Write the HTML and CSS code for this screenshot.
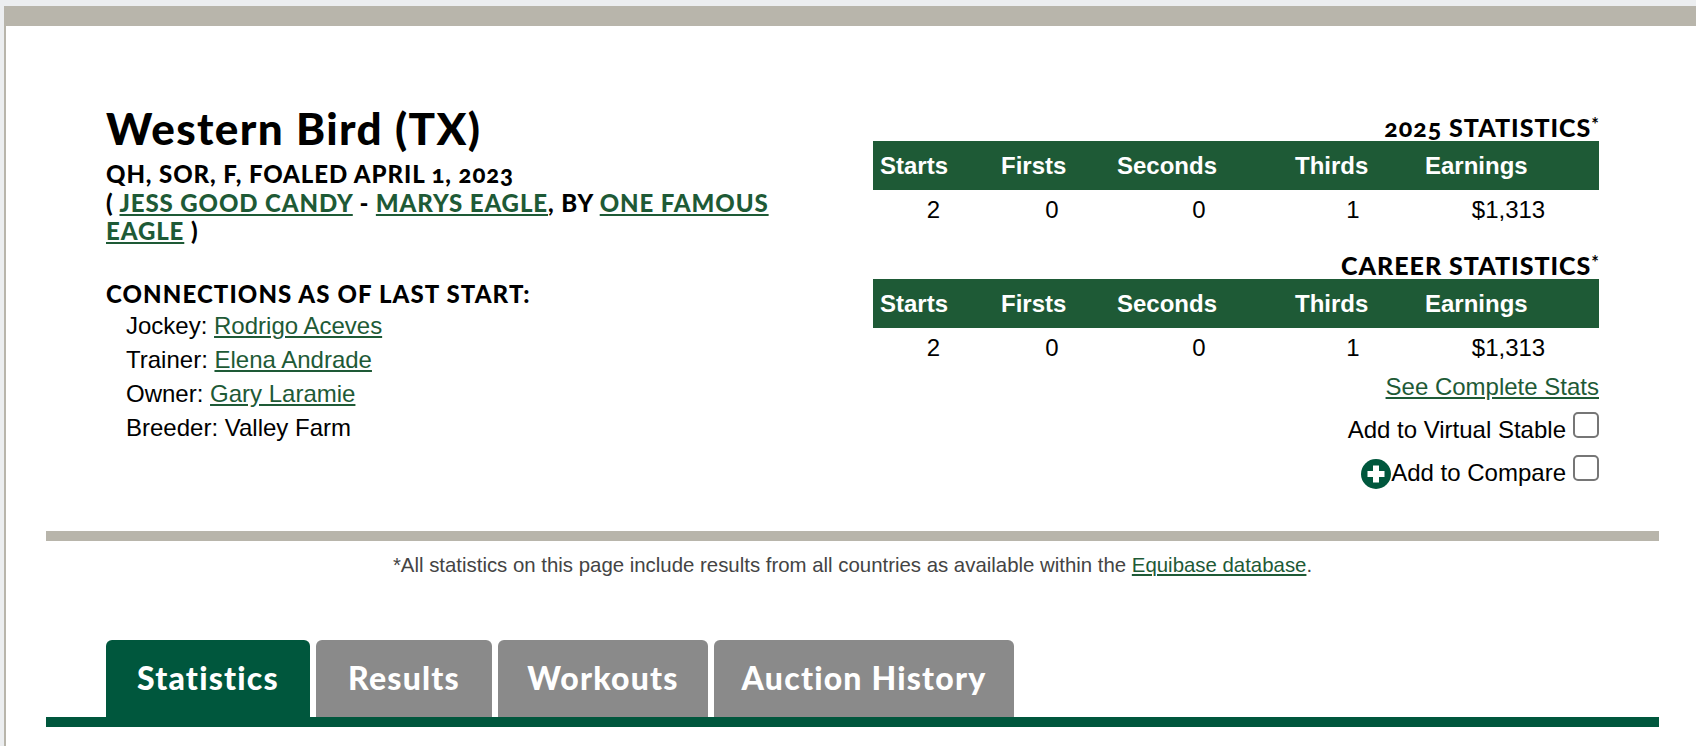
FILE: index.html
```html
<!DOCTYPE html>
<html lang="en">
<head>
<meta charset="utf-8">
<title>Western Bird (TX)</title>
<link rel="stylesheet" href="styles.css">
</head>
<body>
<div class="page">
  <div class="topbar"></div>
  <main class="content">
    <section class="profile">
      <div class="info">
        <h1 class="name">Western Bird (TX)</h1>
        <p class="meta">QH, SOR, F, FOALED APRIL 1, 2023<br>( <a href="#">JESS GOOD CANDY</a> - <a href="#">MARYS EAGLE</a>, BY <a href="#">ONE FAMOUS EAGLE</a> )</p>
        <h2 class="conn-title">CONNECTIONS AS OF LAST START:</h2>
        <ul class="conn">
          <li>Jockey: <a href="#">Rodrigo Aceves</a></li>
          <li>Trainer: <a href="#">Elena Andrade</a></li>
          <li>Owner: <a href="#">Gary Laramie</a></li>
          <li>Breeder: Valley Farm</li>
        </ul>
      </div>
      <div class="stats">
        <h3 class="stats-title first">2025 STATISTICS<sup>*</sup></h3>
        <table class="stat-table">
          <colgroup><col class="c1"><col class="c2"><col class="c3"><col class="c4"><col class="c5"></colgroup>
          <thead><tr><th>Starts</th><th>Firsts</th><th>Seconds</th><th>Thirds</th><th>Earnings</th></tr></thead>
          <tbody><tr><td>2</td><td>0</td><td>0</td><td>1</td><td>$1,313</td></tr></tbody>
        </table>
        <h3 class="stats-title second">CAREER STATISTICS<sup>*</sup></h3>
        <table class="stat-table">
          <colgroup><col class="c1"><col class="c2"><col class="c3"><col class="c4"><col class="c5"></colgroup>
          <thead><tr><th>Starts</th><th>Firsts</th><th>Seconds</th><th>Thirds</th><th>Earnings</th></tr></thead>
          <tbody><tr><td>2</td><td>0</td><td>0</td><td>1</td><td>$1,313</td></tr></tbody>
        </table>
        <a class="complete" href="#">See Complete Stats</a>
        <label class="action stable"><span class="action-text">Add to Virtual Stable</span><span class="box"></span></label>
        <label class="action compare">
          <svg class="plus" viewBox="0 0 30 30" aria-hidden="true"><circle cx="15" cy="15" r="15" fill="#00573d"/><path d="M12 6.5h6v5.500h5.500v6H18v5.500h-6V18H6.500v-6H12z" fill="#fff"/></svg>
          <span class="action-text">Add to Compare</span><span class="box"></span>
        </label>
      </div>
    </section>
    <hr class="divider">
    <p class="note">*All statistics on this page include results from all countries as available within the <a href="#">Equibase database</a>.</p>
    <nav class="tabs">
      <a class="tab active" href="#">Statistics</a>
      <a class="tab" href="#">Results</a>
      <a class="tab" href="#">Workouts</a>
      <a class="tab" href="#">Auction History</a>
    </nav>
  </main>
</div>
</body>
</html>
```
FILE: styles.css
```css
* { box-sizing: border-box; }
html, body { margin: 0; height: 100%; }
body {
  background: #eceef0;
  padding: 6px 0 0 4px;
  overflow: hidden;
  font-family: "Liberation Sans", Arial, sans-serif;
  color: #000;
}
.page {
  height: 740px;
  background: #fff;
  border-left: 2px solid #b8b5ab;
}
.topbar { height: 20px; margin-left: -2px; background: #b8b5ab; }
.content { width: 1613px; margin-left: 40px; }
a { color: #1e5a36; text-decoration: underline; }

.profile {
  display: flex;
  justify-content: space-between;
  height: 505px;
  padding: 0 60px;
}
.info { width: 680px; padding-top: 77px; font-family: Lato, sans-serif; }
.name { margin: 0; font-size: 44px; line-height: 50px; font-weight: 900; letter-spacing: 1.4px; }
.meta {
  margin: 7px 0 0;
  font-size: 24px;
  line-height: 28.5px;
  font-weight: 900;
  letter-spacing: 0.9px;
  font-variant-numeric: oldstyle-nums;
}
.conn-title { margin: 33px 0 0; font-size: 24px; line-height: 30px; font-weight: 900; letter-spacing: 1.1px; }
.conn {
  list-style: none;
  margin: 0;
  padding: 0 0 0 20px;
  font-family: "Liberation Sans", Arial, sans-serif;
  font-size: 24px;
  line-height: 34px;
}

.stats { width: 726px; display: flex; flex-direction: column; align-items: flex-end; }
.stats-title {
  margin: 0;
  font-family: Lato, sans-serif;
  font-size: 25px;
  line-height: 28px;
  font-weight: 900;
  letter-spacing: 1px;
  font-variant-numeric: oldstyle-nums;
}
.stats-title sup { font-size: 18px; line-height: 0; vertical-align: 6px; font-weight: 700; letter-spacing: 0; }
.stats-title.first { margin-top: 87px; }
.stats-title.second { margin-top: 21px; }
.stat-table { width: 726px; border-collapse: collapse; table-layout: fixed; }
.c1 { width: 121px; }
.c2 { width: 116px; }
.c3 { width: 178px; }
.c4 { width: 130px; }
.c5 { width: 181px; }
.stat-table th {
  height: 49px;
  padding: 0 7px;
  background: #1e5a36;
  color: #fff;
  text-align: left;
  font-size: 24px;
  font-weight: 700;
}
.stat-table td { height: 40px; padding: 0; text-align: center; font-size: 24px; }
.complete { margin-top: 2px; font-size: 24px; line-height: 34px; }
.action { display: flex; align-items: flex-start; font-size: 24px; line-height: 30px; }
.action.stable { margin-top: 8px; }
.action.compare { margin-top: 10px; }
.action-text { padding-top: 3px; }
.box {
  width: 26px;
  height: 26px;
  margin-left: 7px;
  border: 2px solid #767676;
  border-radius: 5px;
  background: #fff;
}
.plus { width: 30px; height: 30px; margin-top: 4px; }

.divider { height: 10px; margin: 0; border: 0; background: #b8b5ab; }
.note {
  margin: 11px 0 0;
  text-align: center;
  font-size: 20.4px;
  line-height: 26px;
  color: #444;
}
.note a { color: #1e5a36; }
.tabs {
  display: grid;
  grid-template-columns: 204px 176px 210px 300px;
  gap: 6px;
  height: 87px;
  margin-top: 62px;
  padding: 0 0 0 60px;
  border-bottom: 10px solid #00573d;
}
.tab {
  display: flex;
  align-items: center;
  justify-content: center;
  padding-bottom: 3px;
  border-radius: 6px 6px 0 0;
  background: #8a8a8a;
  color: #fff;
  font-family: Lato, sans-serif;
  font-size: 32px;
  font-weight: 900;
  letter-spacing: 1.2px;
  text-decoration: none;
}
.tab.active { background: #00573d; }
```
